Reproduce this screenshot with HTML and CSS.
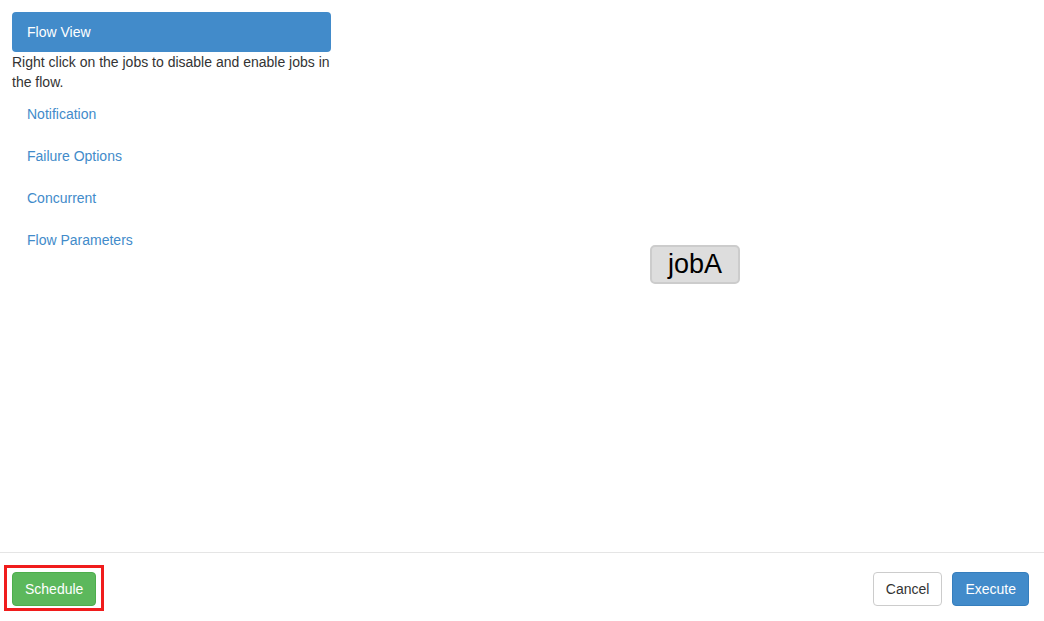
FILE: index.html
```html
<!DOCTYPE html>
<html>
<head>
<meta charset="utf-8">
<link rel="stylesheet" href="styles.css">
</head>
<body>
<div class="page">
  <div class="main">
    <div class="sidebar">
      <ul class="nav">
        <li class="nav-item active"><a>Flow View</a></li>
      </ul>
      <p class="hint">Right click on the jobs to disable and enable jobs in the flow.</p>
      <ul class="nav">
        <li class="nav-item"><a>Notification</a></li>
        <li class="nav-item"><a>Failure Options</a></li>
        <li class="nav-item"><a>Concurrent</a></li>
        <li class="nav-item"><a>Flow Parameters</a></li>
      </ul>
    </div>
    <div class="canvas">
      <div class="node">jobA</div>
    </div>
  </div>
  <div class="footer">
    <div class="highlight-wrap">
      <button class="btn btn-success">Schedule</button>
      <span class="highlight"></span>
    </div>
    <div class="footer-right">
      <button class="btn btn-default">Cancel</button>
      <button class="btn btn-primary">Execute</button>
    </div>
  </div>
</div>
</body>
</html>
```
FILE: styles.css
```css
* { box-sizing: border-box; }
html, body { margin: 0; padding: 0; }
body {
  font-family: "Liberation Sans", Arial, Helvetica, sans-serif;
  font-size: 14px;
  line-height: 20px;
  color: #333;
  background: #fff;
}
.page {
  height: 621px;
  display: flex;
  flex-direction: column;
}
.main {
  flex: 1;
  display: flex;
}
.sidebar {
  width: 343px;
  padding: 12px 12px 0 12px;
}
.nav {
  list-style: none;
  margin: 0;
  padding: 0;
}
.nav-item + .nav-item { margin-top: 2px; }
.nav-item a {
  display: block;
  padding: 10px 15px;
  color: #428bca;
  border-radius: 4px;
}
.nav-item.active a {
  background: #428bca;
  color: #fff;
}
.hint {
  margin: 0 0 2px 0;
}
.canvas {
  flex: 1;
  position: relative;
}
.node {
  position: absolute;
  left: 307px;
  top: 245px;
  width: 90px;
  height: 39px;
  background: #ddd;
  border: 2px solid #ccc;
  border-radius: 5px;
  font-size: 27px;
  line-height: 35px;
  color: #000;
  text-align: center;
}
.footer {
  border-top: 1px solid #e5e5e5;
  padding: 19px 15px 15px 12px;
  display: flex;
  justify-content: space-between;
  align-items: center;
}
.footer-right {
  display: flex;
  gap: 10px;
}
.btn {
  font-family: inherit;
  font-size: 14px;
  line-height: 20px;
  padding: 6px 12px;
  border: 1px solid transparent;
  border-radius: 4px;
  height: 34px;
  cursor: pointer;
}
.btn-success { background: #5cb85c; border-color: #4cae4c; color: #fff; }
.btn-primary { background: #428bca; border-color: #357ebd; color: #fff; }
.btn-default { background: #fff; border-color: #ccc; color: #333; }
.highlight-wrap {
  position: relative;
  display: flex;
}
.highlight {
  position: absolute;
  left: -8px;
  top: -7px;
  width: 100px;
  height: 46px;
  border: 3px solid #f01c1c;
}
```
